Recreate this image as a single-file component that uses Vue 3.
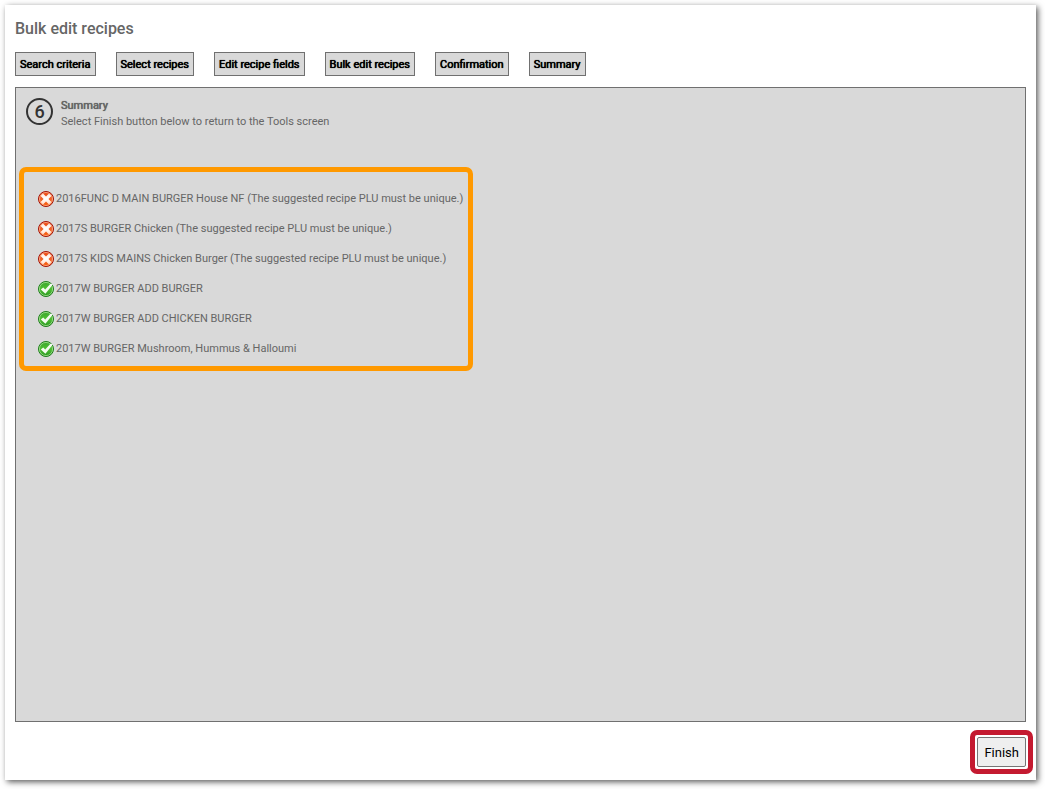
<script setup>
const steps = [
  'Search criteria',
  'Select recipes',
  'Edit recipe fields',
  'Bulk edit recipes',
  'Confirmation',
  'Summary',
]

const results = [
  { ok: false, text: '2016FUNC D MAIN BURGER House NF (The suggested recipe PLU must be unique.)' },
  { ok: false, text: '2017S BURGER Chicken (The suggested recipe PLU must be unique.)' },
  { ok: false, text: '2017S KIDS MAINS Chicken Burger (The suggested recipe PLU must be unique.)' },
  { ok: true, text: '2017W BURGER ADD BURGER' },
  { ok: true, text: '2017W BURGER ADD CHICKEN BURGER' },
  { ok: true, text: '2017W BURGER Mushroom, Hummus & Halloumi' },
]
</script>

<template>
  <main class="page">
    <svg class="defs" width="0" height="0" aria-hidden="true">
      <defs>
        <linearGradient id="red" x1="0" y1="0" x2="0" y2="1">
          <stop offset="0" stop-color="#e84410" />
          <stop offset="0.5" stop-color="#f0642a" />
          <stop offset="1" stop-color="#f85a08" />
        </linearGradient>
        <linearGradient id="cross" x1="0" y1="0" x2="0" y2="1">
          <stop offset="0" stop-color="#ffe9df" />
          <stop offset="0.5" stop-color="#ffffff" />
          <stop offset="1" stop-color="#ffd9c4" />
        </linearGradient>
        <linearGradient id="green" x1="0" y1="0" x2="0" y2="1">
          <stop offset="0" stop-color="#3aa62c" />
          <stop offset="0.5" stop-color="#4fbf34" />
          <stop offset="1" stop-color="#27961f" />
        </linearGradient>
      </defs>
    </svg>
    <section class="card">
      <h1 class="title">Bulk edit recipes</h1>
      <nav class="steps" aria-label="Steps">
        <button v-for="step in steps" :key="step" type="button" class="step">{{ step }}</button>
      </nav>
      <div class="panel">
        <header class="intro">
          <span class="number">6</span>
          <div class="heading">
            <h2 class="subtitle">Summary</h2>
            <p class="hint">Select Finish button below to return to the Tools screen</p>
          </div>
        </header>
        <ul class="results">
          <li v-for="item in results" :key="item.text" class="result">
            <svg v-if="item.ok" class="icon" viewBox="0 0 16 16" role="img" aria-label="Updated">
              <circle cx="8" cy="8" r="7.5" fill="url(#green)" stroke="#1f7d1c" />
              <circle cx="8" cy="8" r="6.6" fill="none" stroke="#b5e6a2" stroke-width="0.7" />
              <path d="M2.8 8.4 5.2 6.4 7.2 8.6 12.4 2.8 15 3.2 7.4 12.8Z" fill="#f4fbf0" />
            </svg>
            <svg v-else class="icon" viewBox="0 0 16 16" role="img" aria-label="Failed">
              <circle cx="8" cy="8" r="7.5" fill="url(#red)" stroke="#a11208" />
              <circle cx="8" cy="8" r="6.5" fill="none" stroke="#ffc2a6" stroke-width="0.7" />
              <path d="M2.6 5 5 2.6 8 5.6 11 2.6 13.4 5 10.4 8 13.4 11 11 13.4 8 10.4 5 13.4 2.6 11 5.6 8Z" fill="url(#cross)" />
            </svg>
            <span>{{ item.text }}</span>
          </li>
        </ul>
      </div>
      <footer class="actions">
        <div class="highlight">
          <button type="button" class="finish">Finish</button>
        </div>
      </footer>
    </section>
  </main>
</template>

<style>
body {
  background: #fff;
}
</style>

<style scoped>
.page {
  box-sizing: border-box;
  display: flex;
  min-height: 100vh;
  padding: 5px 9px 9px 5px;
  font-family: Roboto, "Liberation Sans", sans-serif;
  font-size: 11px;
  line-height: 16px;
  color: #666;
}
.defs {
  position: absolute;
}
.card {
  flex: 1;
  box-sizing: border-box;
  display: flex;
  flex-direction: column;
  min-width: 0;
  padding: 14px 3px 6px 10px;
  background: #fff;
  box-shadow: 2px 2px 6px rgba(0, 0, 0, 0.65);
}
.title {
  margin: 0;
  font-size: 16px;
  line-height: 20px;
  font-weight: 500;
}
.steps {
  display: flex;
  flex-wrap: wrap;
  gap: 20px;
  margin-top: 13px;
}
.step {
  height: 24px;
  padding: 1px 4px 0;
  border: 1px solid #707070;
  background: #d9d9d9;
  color: #000;
  font: 400 11px/16px Roboto, "Liberation Sans", sans-serif;
  text-shadow: 0 0 0 currentColor, 0 0 1px currentColor;
}
.panel {
  flex: 1;
  margin: 11px 7px 0 0;
  border: 1px solid #707070;
  background: #d9d9d9;
}
.intro {
  display: flex;
  gap: 8px;
  padding: 10px 10px 0;
}
.number {
  box-sizing: border-box;
  width: 27px;
  height: 27px;
  border: 2px solid #333;
  border-radius: 50%;
  color: #333;
  font-size: 18px;
  font-weight: 500;
  line-height: 24px;
  text-align: center;
}
.subtitle {
  margin: 0;
  font-size: 11px;
  font-weight: 400;
  text-shadow: 0 0 0 currentColor, 0 0 1px currentColor;
}
.hint {
  margin: 0;
}
.results {
  box-sizing: border-box;
  width: 454px;
  max-width: 100%;
  margin: 37px 0 0 3px;
  padding: 12px 10px 2px 14px;
  border: 5px solid #ff9900;
  border-radius: 7px;
  list-style: none;
}
.result {
  display: flex;
  align-items: center;
  gap: 2px;
  height: 30px;
  white-space: nowrap;
}
.icon {
  flex: none;
  width: 16px;
  height: 16px;
}
.actions {
  display: flex;
  justify-content: flex-end;
  margin-top: 8px;
}
.highlight {
  padding: 2px;
  border: 5px solid #c41a30;
  border-radius: 7px;
}
.finish {
  display: block;
  height: 30px;
  padding: 1px 6px 0;
  border: 1px solid #767676;
  border-radius: 2px;
  background: #efefef;
  color: #000;
  font: 13px/16px Roboto, "Liberation Sans", sans-serif;
}
</style>
